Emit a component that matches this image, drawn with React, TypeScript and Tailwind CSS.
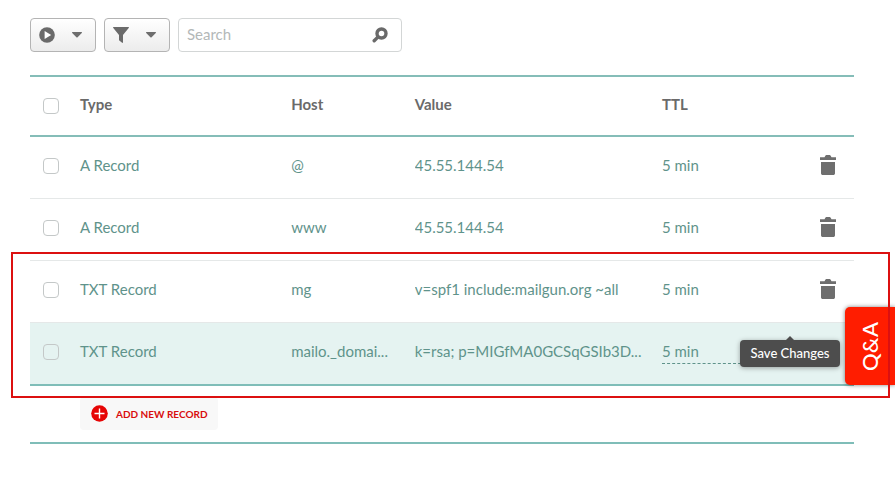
import React, { useState } from 'react';

const RECORDS = [
    { id: 1, type: 'A Record', host: '@', value: '45.55.144.54', ttl: '5 min' },
    { id: 2, type: 'A Record', host: 'www', value: '45.55.144.54', ttl: '5 min' },
    { id: 3, type: 'TXT Record', host: 'mg', value: 'v=spf1 include:mailgun.org ~all', ttl: '5 min' },
    { id: 4, type: 'TXT Record', host: 'mailo._domai...', value: 'k=rsa; p=MIGfMA0GCSqGSIb3D...', ttl: '5 min', editing: true },
];

const Caret = () => (
    <svg width="10" height="6" viewBox="0 0 10 6" fill="#6e6e6e" aria-hidden="true">
        <path d="M0.6 0h8.8c.6 0 .8.6.4 1L5.6 5.2a.8.8 0 0 1-1.200 0L.2 1C-.2.600 0 0 .6 0z" />
    </svg>
);

const TrashIcon = () => (
    <svg width="16" height="20" viewBox="0 0 16 20" fill="#6e6e6e" aria-hidden="true">
        <path d="M4.500 2.200 5.500.4Q5.700 0 6.200 0h3.600q.5 0 .7.400l1 1.800H16V5H0V2.200z" />
        <path d="M1 7h14v11.200c0 1-.8 1.800-1.800 1.800H2.800C1.800 20 1 19.200 1 18.200z" />
    </svg>
);

const Tick = ({ label }: { label: string }) => (
    <input
        type="checkbox"
        aria-label={label}
        className="block size-4 appearance-none rounded-[4px] border border-[#c4c8c8] bg-transparent checked:bg-[#7fbdb8]"
    />
);

const toolButton =
    'flex h-[34px] w-[66px] items-center justify-between rounded-[4px] border border-[#b4b4b4] bg-linear-to-b from-white to-[#ececec] pr-[13px] pl-2';

export default function App() {
    const [search, setSearch] = useState('');

    return (
        <div className="min-h-screen overflow-x-hidden bg-white pt-[18px] pr-[41px] pb-8 pl-[30px] font-[Lato,sans-serif] text-[15px] leading-5 text-[#5f938b]">
            <div className="flex gap-2">
                <button type="button" aria-label="Actions" className={toolButton}>
                    <svg width="16" height="16" viewBox="0 0 16 16" aria-hidden="true">
                        <circle cx="8" cy="8" r="7.800" fill="#6a6a6a" />
                        <path d="M5.600 4v8L12.200 8z" fill="#fff" />
                    </svg>
                    <Caret />
                </button>
                <button type="button" aria-label="Filters" className={toolButton}>
                    <svg width="16" height="16" viewBox="0 0 16 16" fill="#6a6a6a" aria-hidden="true">
                        <path d="M.5 0h15c.4 0 .6.500.4.800L10 8v7.300c0 .500-.5.800-.9.500L6.300 13.500A1 1 0 0 1 6 12.800V8L.1.800C-.1.500.1 0 .5 0z" />
                    </svg>
                    <Caret />
                </button>
                <div className="flex h-[34px] w-56 items-center rounded-[4px] border border-[#d3d6d6] pr-[13px] pl-2">
                    <input
                        type="text"
                        aria-label="Search"
                        placeholder="Search"
                        value={search}
                        onChange={(e) => setSearch(e.target.value)}
                        className="min-w-0 flex-1 pb-0.5 outline-none placeholder:text-[#b3b8b8]"
                    />
                    <button type="button" aria-label="Run search">
                        <svg width="16" height="16" viewBox="0 0 16 16" fill="none" stroke="#6a6a6a" aria-hidden="true">
                            <circle cx="9.500" cy="6.500" r="4.500" strokeWidth="3.400" />
                            <path d="M5.600 10.400 2.200 13.800" strokeWidth="3.400" strokeLinecap="round" />
                        </svg>
                    </button>
                </div>
            </div>

            <div className="relative mt-[23px]">
                <table className="w-full table-fixed border-separate border-spacing-0 text-left">
                    <colgroup>
                        <col className="w-[50px]" />
                        <col />
                        <col className="w-[15%]" />
                        <col className="w-[30%]" />
                        <col className="w-[17%]" />
                        <col className="w-[52px]" />
                    </colgroup>
                    <thead className="text-[#6a6a6a] [&_th]:h-[62px] [&_th]:border-y-2 [&_th]:border-[#85bdb8] [&_th]:pb-1 [&_th]:font-bold">
                        <tr>
                            <th className="pt-1 pl-[13px]"><Tick label="Select all records" /></th>
                            <th>Type</th>
                            <th>Host</th>
                            <th>Value</th>
                            <th>TTL</th>
                            <th aria-label="Delete" />
                        </tr>
                    </thead>
                    <tbody>
                        {RECORDS.map((r) => (
                            <tr
                                key={r.id}
                                className={
                                    r.editing
                                        ? 'bg-[#e5f3f1] [&_td]:h-[63px] [&_td]:border-b-2 [&_td]:border-[#7fbdb8] [&_td]:pb-1.5'
                                        : '[&_td]:h-[62px] [&_td]:border-b [&_td]:border-[#e5e8e8] [&_td]:pb-1.5'
                                }
                            >
                                <td className="pt-0.5 pl-[13px]"><Tick label={`Select ${r.type} ${r.host}`} /></td>
                                <td>{r.type}</td>
                                <td className="truncate">{r.host}</td>
                                <td className="truncate">{r.value}</td>
                                <td className="relative">
                                    {r.editing ? (
                                        <>
                                            <span className="block">{r.ttl}</span>
                                            <span className="absolute inset-x-0 bottom-5 border-b border-dashed border-[#5f938b]" />
                                        </>
                                    ) : (
                                        r.ttl
                                    )}
                                </td>
                                <td>
                                    {!r.editing && (
                                        <button type="button" aria-label={`Delete ${r.type} ${r.host}`} className="mx-auto block">
                                            <TrashIcon />
                                        </button>
                                    )}
                                </td>
                            </tr>
                        ))}
                    </tbody>
                </table>

                <div
                    role="tooltip"
                    className="absolute right-[14px] bottom-[19px] flex h-[27px] w-[100px] items-center justify-center rounded-[4px] bg-[#4d4d4d] pb-0.5 text-[13px] font-medium text-white shadow-[0_1px_5px_rgba(0,0,0,0.35)]"
                >
                    <span className="absolute -top-1 left-1/2 -ml-1 border-x-4 border-b-4 border-x-transparent border-b-[#4d4d4d]" />
                    Save Changes
                </div>

                <button
                    type="button"
                    className="absolute -right-[41px] bottom-px flex h-[78px] w-[50px] items-center justify-center rounded-l-[5px] bg-[#ff1d00] text-[22px] font-medium text-white shadow-[0_0_4px_rgba(0,0,0,0.5)]"
                >
                    <span className="rotate-180 [writing-mode:vertical-rl]">Q&amp;A</span>
                </button>

                {/* outline around the two TXT rows */}
                <div className="pointer-events-none absolute top-[177px] -right-[36px] -bottom-3 -left-[19px] border-2 border-[#dc1010]" />
            </div>

            <div className="border-b-2 border-[#7fbdb8] pt-[11px] pb-3 pl-[50px]">
                <button
                    type="button"
                    className="flex h-[33px] items-center gap-2 rounded-[4px] bg-[#f8f8f8] pr-[10px] pl-[11px] text-[10px] font-bold text-[#d90d0d]"
                >
                    <svg width="17" height="17" viewBox="0 0 17 17" aria-hidden="true">
                        <circle cx="8.500" cy="8.500" r="8.300" fill="#e60505" />
                        <path d="M8.500 3.500v10M3.500 8.500h10" stroke="#fff" strokeWidth="1.400" />
                    </svg>
                    ADD NEW RECORD
                </button>
            </div>
        </div>
    );
}
